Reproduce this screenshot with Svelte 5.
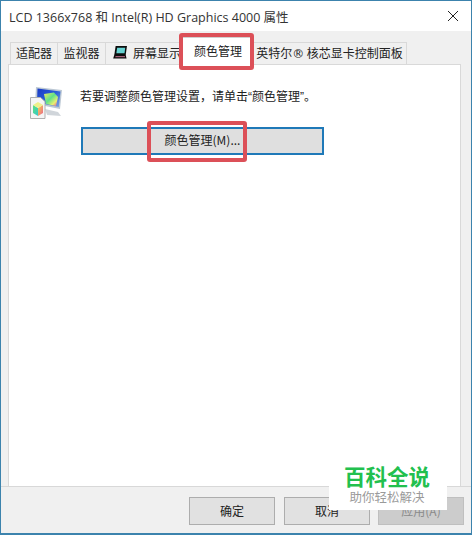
<script>
  const tabs = [
    { label: '适配器', w: 48 },
    { label: '监视器', w: 49 },
    { label: '屏幕显示', w: 77, icon: true },
    { label: '颜色管理', w: 72, active: true },
    { label: '英特尔', mark: '®', rest: ' 核芯显卡控制面板', w: 155 }
  ];
</script>

<div class="window">
  <header class="title">
    <span>LCD 1366x768 和 Intel(R) HD Graphics 4000 属性</span>
    <svg class="close" width="12" height="12" viewBox="0 0 12 12"><path d="M1 1 11 11M11 1 1 11" stroke="#222" stroke-width="1" fill="none"/></svg>
  </header>
  <div class="body">
    <nav class="tabs">
      {#each tabs as t}
        <div class="tab" class:active={t.active} class:withicon={t.icon} style="width:{t.w}px">
          {#if t.icon}
            <svg class="mon" width="16" height="15" viewBox="0 0 16 15">
              <path d="M3 0h13l-1.5 10.500H1.500z" fill="#0c0c0c"/>
              <path d="M4.800 2h9.200l-.8 6.500H3.800z" fill="#66d2d2"/>
              <path d="M1.500 10h13l1 4.500H.2z" fill="#0c0c0c"/>
              <path d="M3 11.500h10.500l.4 1.500H2.500z" fill="#a4607a"/>
            </svg>
          {/if}
          <span>{t.label}{#if t.mark}<span class="reg">{t.mark}</span>{t.rest}{/if}</span>
        </div>
      {/each}
    </nav>
    <section class="panel">
      <div class="row">
        <svg class="cm" width="32" height="32" viewBox="0 0 32 32">
          <defs>
            <linearGradient id="scr" x1="0" y1="0" x2="1" y2="1">
              <stop offset="0" stop-color="#1a3ac4"/><stop offset=".5" stop-color="#2a5ed8"/><stop offset="1" stop-color="#7fa6dc"/>
            </linearGradient>
            <linearGradient id="cube" x1="0" y1="0" x2="1" y2="1">
              <stop offset="0" stop-color="#f6ee60"/><stop offset=".45" stop-color="#5ee28a"/><stop offset=".75" stop-color="#e8f070"/><stop offset="1" stop-color="#e8489c"/>
            </linearGradient>
            <linearGradient id="left" x1="0" y1="0" x2="1" y2="1">
              <stop offset="0" stop-color="#5ce07a"/><stop offset="1" stop-color="#36c8d0"/>
            </linearGradient>
            <linearGradient id="right" x1="0" y1="0" x2="1" y2="1">
              <stop offset="0" stop-color="#f3d850"/><stop offset="1" stop-color="#ec5f8c"/>
            </linearGradient>
          </defs>
          <path d="M6 0 32 3 30 22 5 17z" fill="#bcc8d4"/>
          <path d="M7.500 1.500 30.500 4.500 28.800 20 7 15.500z" fill="url(#scr)"/>
          <path d="M14 7 24 5.500 28 10 26 19 16 17z" fill="url(#cube)"/>
          <path d="M15 22 28 25 31 29 17 28z" fill="#d0d5da"/>
          <path d="M.5 10.500h10l4.500 4v17H.5z" fill="#f5f5f5" stroke="#b0b0b0" stroke-width="1"/>
          <path d="M3 18v8l5 3v-8z" fill="url(#left)"/>
          <path d="M13 18v8l-5 3v-8z" fill="url(#right)"/>
          <path d="M3 18 8 15 13 18 8 21z" fill="#eff08a"/>
        </svg>
        <p>若要调整颜色管理设置，请单击<span class="q">“</span>颜色管理<span class="q">”</span>。</p>
      </div>
      <button class="cmbtn">颜色管理(M)...</button>
    </section>
    <footer class="foot">
      <button class="btn">确定</button>
      <button class="btn mid">取消</button>
      <button class="btn off">应用(A)</button>
    </footer>
  </div>

  <div class="mark tabmark"></div>
  <div class="mark btnmark"></div>
  <div class="wm">
    <strong>百科全说</strong>
    <small>助你轻松解决</small>
  </div>
</div>

<style>
  :global(body) { margin: 0; }
  .window {
    position: relative;
    box-sizing: border-box;
    width: 472px;
    height: 535px;
    border: 1px solid #3c83ad;
    border-bottom-width: 2px;
    background: #f0f0f0;
    font-family: "Noto Sans CJK SC", "Liberation Sans", sans-serif;
    font-size: 12px;
    color: #222;
    display: flex;
    flex-direction: column;
    overflow: hidden;
  }
  .title {
    height: 30px;
    flex: none;
    background: #fff;
    display: flex;
    align-items: center;
    justify-content: space-between;
    padding: 0 12px 0 8px;
    font-size: 12.5px;
    font-family: "Open Sans", "Noto Sans CJK SC", sans-serif;
    color: #333;
  }
  .body { flex: 1; display: flex; flex-direction: column; min-height: 0; }
  .tabs {
    display: flex;
    align-items: flex-end;
    height: 33px;
    padding-left: 9px;
    flex: none;
  }
  .tab {
    box-sizing: border-box;
    height: 22px;
    background: #f0f0f0;
    border: 1px solid #d9d9d9;
    border-bottom: 0;
    margin-right: -1px;
    padding-bottom: 2px;
    display: flex;
    align-items: center;
    justify-content: center;
    white-space: nowrap;
  }
  .tab.withicon { justify-content: flex-start; padding-left: 7px; gap: 6px; }
  .tab.active {
    height: 28px;
    background: #fff;
    position: relative;
    z-index: 1;
    margin-bottom: -1px;
    padding-left: 2px;
    border-color: #d0d0d0;
  }
  .reg { font-family: "DejaVu Sans", sans-serif; font-size: 12px; line-height: 1; }
  .panel {
    box-sizing: border-box;
    flex: 1;
    margin: 0 10px 0 7px;
    background: #fff;
    border: 1px solid #d9d9d9;
    border-bottom: 0;
    padding: 22px 0 0 21px;
  }
  .row { display: flex; align-items: flex-start; gap: 18px; height: 32px; }
  .row p { margin: 0; line-height: 18px; }
  .q { font-family: "Liberation Sans", sans-serif; }
  .cmbtn {
    display: block;
    box-sizing: border-box;
    width: 243px;
    height: 28px;
    margin: 8px 0 0 51px;
    border: 2px solid #1f79b8;
    background: #dfdfdf;
    font: inherit;
    color: #222;
    padding: 0 0 3px;
  }
  .foot {
    flex: none;
    height: 47px;
    border-top: 1px solid #d8d8d8;
    display: flex;
    justify-content: flex-end;
    gap: 8px;
    padding: 10px 7px 0 0;
    box-sizing: border-box;
  }
  .btn {
    box-sizing: border-box;
    width: 86px;
    height: 28px;
    border: 1px solid #adadad;
    background: #e1e1e1;
    font: inherit;
    color: #222;
    padding: 0 0 2px;
  }
  .btn.mid { margin-left: 1px; }
  .btn.off { background: #cccccc; border-color: #bfbfbf; color: #8a8a8a; }
  .mark {
    position: absolute;
    box-sizing: border-box;
    border: 4px solid #dc5058;
    border-radius: 3px;
    pointer-events: none;
    z-index: 2;
  }
  .tabmark { left: 178px; top: 32px; width: 75px; height: 37px; }
  .btnmark { left: 146px; top: 120px; width: 100px; height: 41px; }
  .wm {
    position: absolute;
    z-index: 3;
    left: 328px;
    top: 462px;
    width: 118px;
    height: 47px;
    padding-right: 2px;
    box-sizing: border-box;
    background: #fff;
    display: flex;
    flex-direction: column;
    align-items: center;
  }
  .wm strong { font-size: 21.5px; line-height: 26px; color: #22c04e; font-weight: 700; }
  .wm small { font-size: 12.5px; line-height: 16px; color: #9a9a9a; }
</style>
